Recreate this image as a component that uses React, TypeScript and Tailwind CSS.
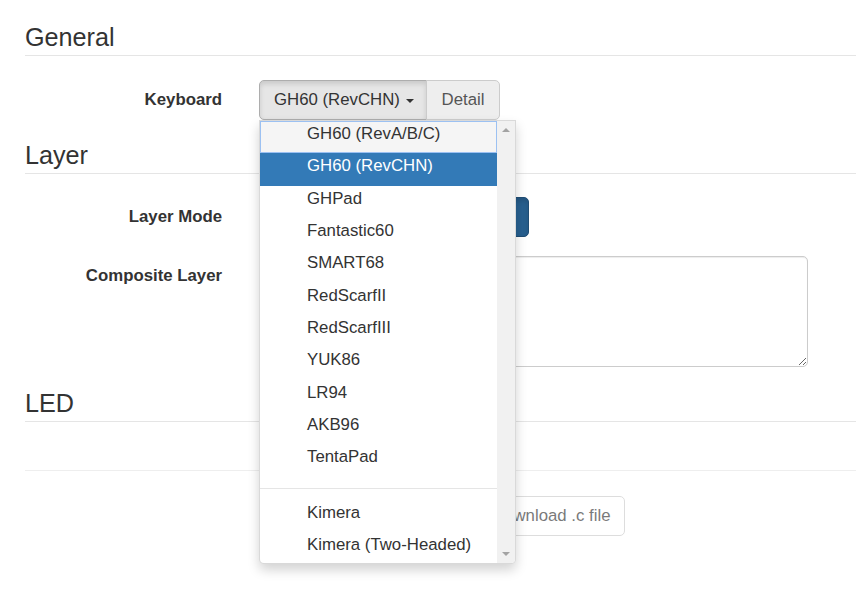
import React from 'react';

const boards = [
  'GH60 (RevA/B/C)',
  'GH60 (RevCHN)',
  'GHPad',
  'Fantastic60',
  'SMART68',
  'RedScarfII',
  'RedScarfIII',
  'YUK86',
  'LR94',
  'AKB96',
  'TentaPad',
];

const boardsExtra = ['Kimera', 'Kimera (Two-Headed)'];

function Legend({ children, mb }: { children: React.ReactNode; mb: string }) {
  return (
    <div className={`h-[37px] border-b border-[#e5e5e5] text-[25.2px] leading-[36px] ${mb}`}>{children}</div>
  );
}

function Label({ children }: { children: React.ReactNode }) {
  return <div className="w-[197px] shrink-0 text-right font-bold pt-[8px] leading-[24px]">{children}</div>;
}

function BoardMenu() {
  return (
    <div className="absolute left-0 top-full z-10 flex h-[444px] w-[257px] overflow-hidden rounded-b-[5px] border border-[rgba(0,0,0,0.15)] bg-white shadow-[0_6px_12px_rgba(0,0,0,0.175)]">
      <ul className="flex-1">
        {boards.map((b, i) => (
          <li
            key={b}
            className={`flex h-[32.33px] items-center pb-[6px] pl-[47px] leading-[24px] ${
              i === 0
                ? 'bg-[#f5f5f5] shadow-[inset_0_0_0_1px_#9cc1f2]'
                : i === 1
                ? 'bg-[#337ab7] text-white'
                : 'text-[#333]'
            }`}
          >
            {b}
          </li>
        ))}
        <li className="my-[11.4px] h-px bg-[#e5e5e5]" />
        {boardsExtra.map(b => (
          <li key={b} className="flex h-[32.33px] items-center pb-[8px] pl-[47px] leading-[24px]">
            {b}
          </li>
        ))}
      </ul>
      <div className="flex w-[18px] flex-col items-center justify-between bg-[#f1f1f1] py-[7px]">
        <span className="h-0 w-0 border-x-[4px] border-b-[4px] border-x-transparent border-b-[#a3a3a3]" />
        <span className="h-0 w-0 border-x-[4px] border-t-[4px] border-x-transparent border-t-[#a3a3a3]" />
      </div>
    </div>
  );
}

export default function App() {
  return (
    <div className="min-h-screen overflow-hidden bg-white pl-[25px] pt-[19px] font-['Liberation_Sans',Arial,sans-serif] text-[16.8px] leading-[1.42857] text-[#333]">
      <Legend mb="mb-[24px]">General</Legend>

      <div className="mb-[17px] flex">
        <Label>Keyboard</Label>
        <div className="relative ml-[37px] flex h-[40px]">
          <button className="flex w-[168px] items-center whitespace-nowrap rounded-l-[5px] border border-[#adadad] bg-[#e6e6e6] pl-[14px] shadow-[inset_0_3px_5px_rgba(0,0,0,0.125)]">
            GH60 (RevCHN)
            <span className="ml-[6px] mt-[1px] h-0 w-0 border-x-[4px] border-t-[4px] border-x-transparent border-t-[#333]" />
          </button>
          <button className="-ml-px w-[74px] rounded-r-[5px] border border-[#ccc] bg-[#eee] text-[#555]">Detail</button>
          <BoardMenu />
        </div>
      </div>

      <Legend mb="mb-[23px]">Layer</Legend>

      <div className="mb-[19px] flex">
        <Label>Layer Mode</Label>
        <div className="ml-[37px] flex h-[40px]">
          <button aria-label="Simple" className="w-[135px] rounded-l-[5px] border border-[#ccc] bg-white" />
          <button
            aria-label="Composite"
            className="-ml-px w-[136px] rounded-r-[5px] border border-[#204d74] bg-[#286090] shadow-[inset_0_3px_5px_rgba(0,0,0,0.125)]"
          />
        </div>
      </div>

      <div className="mb-[18px] flex">
        <Label>Composite Layer</Label>
        <textarea className="ml-[37px] h-[111px] w-[549px] rounded-[5px] border border-[#ccc] bg-white px-[14px] py-[7px] shadow-[inset_0_1px_1px_rgba(0,0,0,0.075)] outline-none" />
      </div>

      <Legend mb="mb-[48px]">LED</Legend>

      <div className="mb-[25px] h-px bg-[#eee]" />

      <div className="flex pl-[234px]">
        <button aria-label="Download .eep file" className="h-[40px] w-[213px] rounded-[5px] border border-[#ccc] bg-white" />
        <button className="ml-[5px] h-[40px] w-[148px] rounded-[5px] border border-[#ccc] bg-white pl-[14px] text-left opacity-65">
          Download .c file
        </button>
      </div>
    </div>
  );
}
